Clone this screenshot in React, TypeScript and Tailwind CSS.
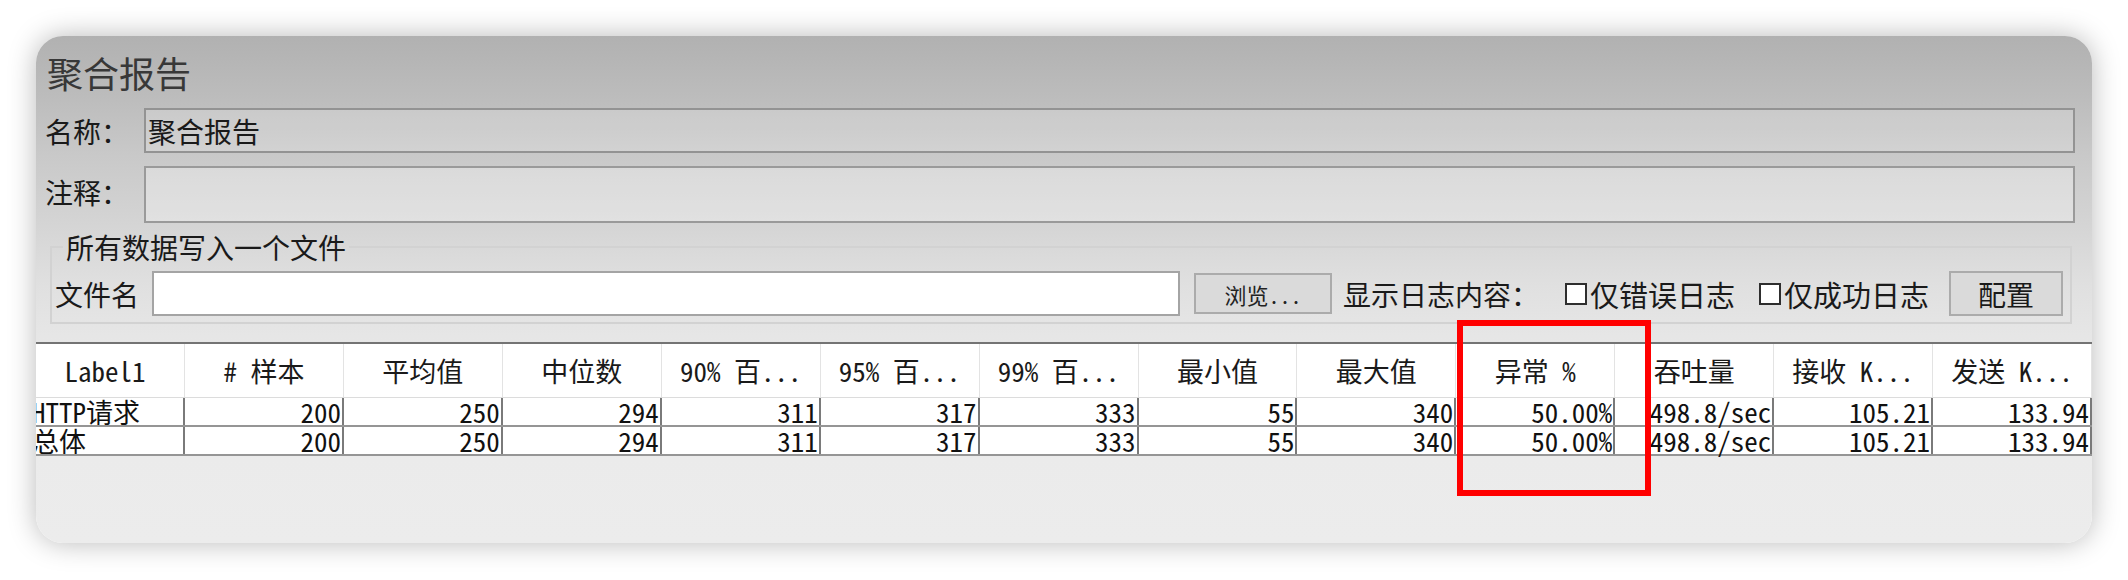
import React from "react";

const headers = [
  "Label1",
  "# 样本",
  "平均值",
  "中位数",
  "90% 百...",
  "95% 百...",
  "99% 百...",
  "最小值",
  "最大值",
  "异常 %",
  "吞吐量",
  "接收 K...",
  "发送 K...",
];

const rows = [
  ["HTTP请求", "200", "250", "294", "311", "317", "333", "55", "340", "50.00%", "498.8/sec", "105.21", "133.94"],
  ["总体", "200", "250", "294", "311", "317", "333", "55", "340", "50.00%", "498.8/sec", "105.21", "133.94"],
];

function CheckBox() {
  return <span className="inline-block w-[22px] h-[22px] border-2 border-[#2e2e2e] bg-white shrink-0" />;
}

export default function App() {
  return (
    <div className="w-[2128px] h-[580px] bg-white pt-[36px] pl-[36px] font-['Noto_Sans_Mono_CJK_SC','Noto_Sans_CJK_SC',monospace] text-[#151515]">
      <div className="relative w-[2056px] h-[507px] rounded-[27px] overflow-hidden shadow-[0_0_28px_rgba(0,0,0,0.28)] bg-[linear-gradient(to_bottom,#b1b1b1_0px,#bcbcbc_60px,#c9c9c9_120px,#d3d3d3_180px,#e0e0e0_250px,#e6e6e6_300px,#ebebeb_420px,#ececec_507px)] flex flex-col">
        {/* Title */}
        <div className="pt-[18px] pl-[11px] text-[36px] leading-[36px] text-[#383838]">聚合报告</div>

        {/* Name row */}
        <div className="mt-[18px] flex items-center">
          <div className="w-[108px] pl-[9px] text-[28px] leading-[28px] text-[#1a1a1a]">名称：</div>
          <div className="flex-1 mr-[17px] h-[45px] border-2 border-[#939393] bg-[rgba(255,255,255,0.18)] flex items-center pl-[2px] text-[28px] leading-[28px] text-[#1a1a1a]">
            聚合报告
          </div>
        </div>

        {/* Comment row */}
        <div className="mt-[13px] flex items-center">
          <div className="w-[108px] pl-[9px] text-[28px] leading-[28px] text-[#1a1a1a] -mt-[6px]">注释：</div>
          <div className="flex-1 mr-[17px] h-[57px] border-2 border-[#9a9a9a] bg-[rgba(255,255,255,0.3)]" />
        </div>

        {/* Fieldset */}
        <fieldset className="mt-[10px] ml-[14px] mr-[20px] border-2 border-[#d2d2d2] pl-[3px] pr-[7px] pb-[6px]">
          <legend className="ml-[8px] px-[3px] text-[28px] leading-[28px] text-[#1a1a1a]">所有数据写入一个文件</legend>
          <div className="flex items-center pt-[10px] text-[#1a1a1a]">
            <span className="text-[28px] leading-[28px]">文件名</span>
            <div className="ml-[13px] flex-1 h-[45px] bg-white border-2 border-[#a4a4a4]" />
            <button className="ml-[14px] w-[138px] h-[41px] bg-[#dadada] border-2 border-[#ababab] text-[22px] leading-[22px] text-[#222]">
              浏览...
            </button>
            <span className="ml-[11px] text-[28px] leading-[28px]">显示日志内容：</span>
            <span className="ml-[26px] flex items-center">
              <CheckBox />
              <span className="ml-[3px] text-[29px] leading-[28px]">仅错误日志</span>
            </span>
            <span className="ml-[24px] flex items-center">
              <CheckBox />
              <span className="ml-[3px] text-[29px] leading-[28px]">仅成功日志</span>
            </span>
            <button className="ml-[20px] w-[114px] h-[45px] bg-[#dadada] border-2 border-[#ababab] text-[28px] leading-[28px] text-[#1a1a1a]">
              配置
            </button>
          </div>
        </fieldset>

        {/* Table */}
        <div className="mt-[18px] border-t-2 border-[#747474]">
          <div className="grid grid-cols-[149px_repeat(12,1fr)] bg-white border-b border-[#dcdcdc]">
            {headers.map((h, i) => (
              <div
                key={i}
                className={
                  "h-[53px] flex items-center justify-center border-r border-[#e3e3e3] text-[27px] leading-[28px] text-[#1a1a1a] whitespace-pre " +
                  (i === 0 ? "pr-[10px]" : "")
                }
              >
                {h}
              </div>
            ))}
          </div>
          {rows.map((r, ri) => (
            <div key={ri} className="grid grid-cols-[149px_repeat(12,1fr)] bg-white border-b-2 border-[#959595]">
              {r.map((c, ci) => (
                <div
                  key={ci}
                  className={
                    "h-[27px] flex items-center border-r-2 border-[#7a7a7a] text-[27px] leading-[27px] text-[#111] whitespace-pre " +
                    (ci === 0 ? "justify-start overflow-hidden" : "justify-end pr-[1px]")
                  }
                >
                  {ci === 0 ? <span className="-ml-[4px]">{c}</span> : c}
                </div>
              ))}
            </div>
          ))}
        </div>

        {/* Highlight box */}
        <div className="absolute left-[1421px] top-[284px] w-[194px] h-[176px] border-[6px] border-[#ff0000]" />
      </div>
    </div>
  );
}
